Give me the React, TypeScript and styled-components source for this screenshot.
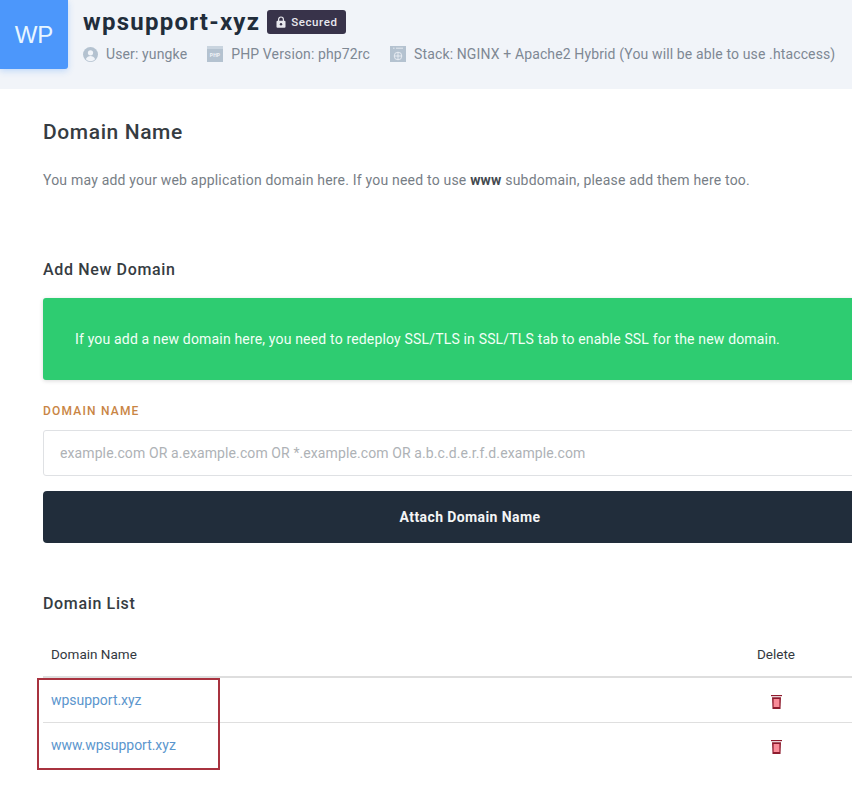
import React from "react";
import styled, { createGlobalStyle } from "styled-components";

const GlobalStyle = createGlobalStyle`
  html, body {
    margin: 0;
    padding: 0;
    background: #fff;
    overflow: hidden;
  }
  body {
    font-family: Roboto, "Liberation Sans", sans-serif;
  }
  * {
    box-sizing: border-box;
  }
`;

const domains = ["wpsupport.xyz", "www.wpsupport.xyz"];

const TrashIcon = () => (
  <svg width="11" height="14" viewBox="0 0 11 14">
    <rect x="0" y="0" width="11" height="1.2" fill="#8e1c2e" />
    <path d="M1 2.2h9l-.5 11.8H1.5z" fill="#8e1c2e" />
    <rect x="2.6" y="4" width="5.8" height="8" fill="#f98b98" />
  </svg>
);

const App: React.FC = () => {
  return (
    <Page>
      <GlobalStyle />
      <Header>
        <Avatar>WP</Avatar>
        <HeaderInfo>
          <TitleRow>
            <AppName>wpsupport-xyz</AppName>
            <Badge>
              <svg width="10" height="12" viewBox="0 0 10 12">
                <path d="M2.6 5V3.4a2.4 2.4 0 0 1 4.8 0V5" fill="none" stroke="#e8e8ee" strokeWidth="1.2" />
                <rect x="0.5" y="4.8" width="9" height="7" rx="1" fill="#e8e8ee" />
                <circle cx="5" cy="8.2" r="1.2" fill="#38334a" />
              </svg>
              Secured
            </Badge>
          </TitleRow>
          <MetaRow>
            <MetaItem>
              <svg width="15" height="15" viewBox="0 0 16 16">
                <circle cx="8" cy="8" r="8" fill="#b4c2d0" />
                <circle cx="8" cy="6.2" r="2.8" fill="#f1f4f9" />
                <path d="M3 13c1-2.6 3-3.4 5-3.4s4 .8 5 3.4a7 7 0 0 1-10 0z" fill="#f1f4f9" />
              </svg>
              User: yungke
            </MetaItem>
            <MetaItem>
              <svg width="16" height="16" viewBox="0 0 16 16">
                <rect width="16" height="16" fill="#b4c2d0" />
                <rect y="0" width="16" height="3" fill="#c9d4df" />
                <text x="8" y="11" fontSize="5" fontWeight="700" fill="#f1f4f9" textAnchor="middle" fontFamily="Roboto, sans-serif">PHP</text>
              </svg>
              PHP Version: php72rc
            </MetaItem>
            <MetaItem>
              <svg width="16" height="16" viewBox="0 0 16 16">
                <rect width="16" height="16" fill="#b4c2d0" />
                <path d="M3 2.2h1.6M6 2.2h7" stroke="#f1f4f9" strokeWidth="0.8" />
                <circle cx="8" cy="10" r="3.8" fill="none" stroke="#f1f4f9" strokeWidth="0.8" />
                <path d="M4.2 10h7.6M8 6.2v7.6" stroke="#f1f4f9" strokeWidth="0.8" />
              </svg>
              Stack: NGINX + Apache2 Hybrid (You will be able to use .htaccess)
            </MetaItem>
          </MetaRow>
        </HeaderInfo>
      </Header>

      <Content>
        <PageTitle>Domain Name</PageTitle>
        <Intro>
          You may add your web application domain here. If you need to use <strong>www</strong> subdomain, please add them here too.
        </Intro>

        <SectionTitle>Add New Domain</SectionTitle>
        <Notice>If you add a new domain here, you need to redeploy SSL/TLS in SSL/TLS tab to enable SSL for the new domain.</Notice>

        <FieldLabel>DOMAIN NAME</FieldLabel>
        <DomainInput placeholder="example.com OR a.example.com OR *.example.com OR a.b.c.d.e.r.f.d.example.com" />
        <AttachButton>Attach Domain Name</AttachButton>

        <ListTitle>Domain List</ListTitle>
        <Table>
          <HeadRow>
            <NameCell>Domain Name</NameCell>
            <DeleteCell>Delete</DeleteCell>
          </HeadRow>
          {domains.map((domain) => (
            <BodyRow key={domain}>
              <NameCell>
                <DomainLink href="#">{domain}</DomainLink>
              </NameCell>
              <DeleteCell>
                <DeleteButton>
                  <TrashIcon />
                </DeleteButton>
              </DeleteCell>
            </BodyRow>
          ))}
          <Highlight />
        </Table>
      </Content>
    </Page>
  );
};

export default App;

const Page = styled.div`
  width: 852px;
  height: 785px;
  overflow: hidden;
  background: #fff;
`;

const Header = styled.header`
  display: flex;
  height: 89px;
  background: #f1f4f9;
`;

const Avatar = styled.div`
  display: flex;
  align-items: center;
  justify-content: center;
  flex: none;
  width: 68px;
  height: 69px;
  background: #4c97fb;
  border-radius: 0 0 3px 0;
  box-shadow: 0 2px 6px rgba(76, 151, 251, 0.3);
  color: #e8f6ff;
  font-family: "Liberation Sans", sans-serif;
  font-size: 24px;
`;

const HeaderInfo = styled.div`
  display: flex;
  flex-direction: column;
  padding: 6px 0 0 15px;
  white-space: nowrap;
`;

const TitleRow = styled.div`
  display: flex;
  align-items: center;
  gap: 7px;
  height: 32px;
`;

const AppName = styled.h1`
  margin: 0;
  color: #212d3b;
  font-size: 24px;
  font-weight: 700;
  letter-spacing: 1.25px;
`;

const Badge = styled.span`
  display: inline-flex;
  align-items: center;
  gap: 5px;
  height: 24px;
  padding: 0 9px;
  background: #38334a;
  border-radius: 3px;
  color: #e8e8ee;
  font-size: 11.5px;
  font-weight: 500;
  letter-spacing: 0.6px;
`;

const MetaRow = styled.div`
  display: flex;
  gap: 20px;
  margin-top: 8px;
`;

const MetaItem = styled.span`
  display: inline-flex;
  align-items: center;
  gap: 8px;
  color: #7e8894;
  font-size: 14px;
  letter-spacing: 0.13px;
`;

const Content = styled.main`
  width: 854px;
  margin-left: 43px;
`;

const PageTitle = styled.h2`
  margin: 30px 0 0;
  color: #363c42;
  font-size: 21px;
  font-weight: 500;
  letter-spacing: 0.6px;
  line-height: 26px;
`;

const Intro = styled.p`
  margin: 25px 0 0;
  color: #777e86;
  font-size: 14px;
  letter-spacing: 0.2px;
  line-height: 20px;

  strong {
    color: #444a50;
    font-weight: 700;
  }
`;

const SectionTitle = styled.h3`
  margin: 69px 0 0;
  color: #363c42;
  font-size: 16px;
  font-weight: 500;
  letter-spacing: 0.65px;
  line-height: 22px;
`;

const Notice = styled.div`
  display: flex;
  align-items: center;
  height: 82px;
  margin-top: 17px;
  padding: 0 32px;
  background: #2ecc71;
  border-radius: 3px;
  box-shadow: 0 1px 4px rgba(0, 0, 0, 0.15);
  color: #f2fff7;
  font-size: 14px;
  letter-spacing: 0.17px;
`;

const FieldLabel = styled.label`
  display: block;
  margin-top: 23px;
  color: #c98544;
  font-size: 12px;
  font-weight: 500;
  letter-spacing: 1.2px;
  line-height: 16px;
`;

const DomainInput = styled.input`
  display: block;
  width: 100%;
  height: 46px;
  margin-top: 11px;
  padding: 0 16px;
  background: #fff;
  border: 1px solid #dfe1e4;
  border-radius: 3px;
  font-family: inherit;
  font-size: 14px;
  letter-spacing: 0.1px;

  &::placeholder {
    color: #aeb2b6;
    opacity: 1;
  }
`;

const AttachButton = styled.button`
  display: block;
  width: 100%;
  height: 52px;
  margin-top: 15px;
  background: #212d3b;
  border: 0;
  border-radius: 4px;
  color: #f4f5f6;
  font-family: inherit;
  font-size: 14px;
  font-weight: 700;
  letter-spacing: 0.4px;
`;

const ListTitle = styled(SectionTitle)`
  margin-top: 50px;
`;

const Table = styled.div`
  position: relative;
  margin-top: 15px;
`;

const HeadRow = styled.div`
  display: flex;
  align-items: center;
  height: 48px;
  padding-top: 1px;
  border-bottom: 2px solid #dedede;
  color: #33383e;
  font-size: 13.5px;
`;

const BodyRow = styled.div`
  display: flex;
  align-items: center;
  height: 45px;
  border-bottom: 1px solid #dfdfdf;
  font-size: 14px;

  & + & {
    height: 44px;
    border-bottom: 0;
  }
`;

const NameCell = styled.div`
  flex: 1;
  padding-left: 8px;
`;

const DeleteCell = styled.div`
  display: flex;
  justify-content: center;
  width: 40px;
  margin-right: 101px;
`;

const DeleteButton = styled.span`
  display: flex;
  margin-top: 4px;
`;

const DomainLink = styled.a`
  color: #5b96cd;
  letter-spacing: -0.03px;
  text-decoration: none;
`;

/* annotation drawn over the screenshot */
const Highlight = styled.div`
  position: absolute;
  top: 48px;
  left: -6px;
  width: 183px;
  height: 92px;
  border: 2px solid #a8323f;
`;
